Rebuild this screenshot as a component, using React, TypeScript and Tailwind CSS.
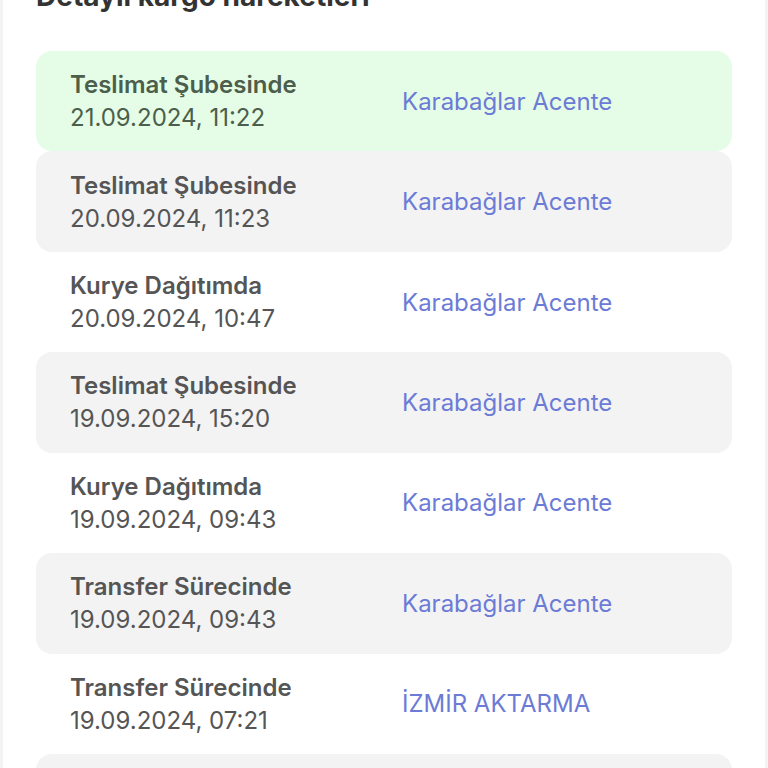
type Movement = {
  status: string;
  date: string;
  place: string;
};

const movements: Movement[] = [
  { status: "Teslimat Şubesinde", date: "21.09.2024, 11:22", place: "Karabağlar Acente" },
  { status: "Teslimat Şubesinde", date: "20.09.2024, 11:23", place: "Karabağlar Acente" },
  { status: "Kurye Dağıtımda", date: "20.09.2024, 10:47", place: "Karabağlar Acente" },
  { status: "Teslimat Şubesinde", date: "19.09.2024, 15:20", place: "Karabağlar Acente" },
  { status: "Kurye Dağıtımda", date: "19.09.2024, 09:43", place: "Karabağlar Acente" },
  { status: "Transfer Sürecinde", date: "19.09.2024, 09:43", place: "Karabağlar Acente" },
  { status: "Transfer Sürecinde", date: "19.09.2024, 07:21", place: "İZMİR AKTARMA" },
  { status: "Transfer Sürecinde", date: "19.09.2024, 05:10", place: "İZMİR AKTARMA" },
];

export default function App() {
  return (
    <div
      className="h-[768px] overflow-hidden bg-[#f3f3f3] px-[3px]"
      style={{ fontFamily: "Inter, 'Noto Sans', sans-serif" }}
    >
      <div className="min-h-full bg-white px-[33px]">
        <h2 className="-mt-[21px] mb-[38px] text-[28px] font-bold leading-[34px] text-[#333333]">
          Detaylı kargo hareketleri
        </h2>

        <div className="flex flex-col">
          {movements.map((m, i) => {
            const first = i === 0;
            const striped = i % 2 === 1;
            return (
              <div
                key={i}
                className={`grid h-[100.43px] shrink-0 grid-cols-[332px_1fr] items-center rounded-[16px] pl-[34px] ${
                  first ? "bg-[#e5fde6]" : striped ? "bg-[#f3f3f4]" : "bg-white"
                }`}
              >
                <div className="flex flex-col">
                  <span
                    className={`text-[24px] font-semibold leading-[33px] ${
                      first ? "text-[#4c5e4c]" : "text-[#555555]"
                    }`}
                  >
                    {m.status}
                  </span>
                  <span
                    className={`text-[24px] leading-[33px] ${
                      first ? "text-[#4c5e4c]" : "text-[#555555]"
                    }`}
                  >
                    {m.date}
                  </span>
                </div>
                <span className="text-[24px] leading-[33px] text-[#6b7bd6]">{m.place}</span>
              </div>
            );
          })}
        </div>
      </div>
    </div>
  );
}
